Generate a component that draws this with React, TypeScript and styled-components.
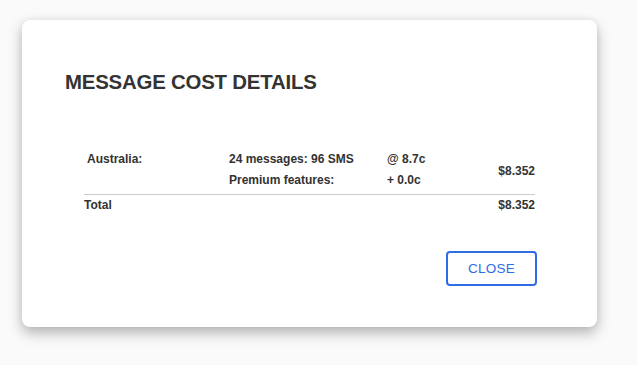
import styled, { createGlobalStyle } from "styled-components";

const GlobalStyle = createGlobalStyle`
    html, body {
        margin: 0;
        padding: 0;
        background: #fafafa;
        font-family: "Liberation Sans", Arial, sans-serif;
    }
`

const Page = styled.div`
    box-sizing: border-box;
    min-height: 100vh;
    padding: 20px 0 0 22px;
    background: #fafafa;
`

const Card = styled.div`
    box-sizing: border-box;
    width: 575px;
    height: 307px;
    background: #fff;
    border-radius: 8px;
    box-shadow: 0 6px 14px rgba(0, 0, 0, 0.28), 0 0 6px rgba(0, 0, 0, 0.06);
    padding: 50px 60px 0 43px;
    display: flex;
    flex-direction: column;
`

const Title = styled.h2`
    margin: 0;
    font-size: 20.4px;
    line-height: 24px;
    font-weight: bold;
    color: #333;
    letter-spacing: -0.2px;
`

const CostTable = styled.table`
    margin: 55px 0 0 19px;
    width: 451px;
    border-collapse: collapse;
    font-size: 12px;
    font-weight: bold;
    color: #333;
`

const Cell = styled.td<{ $right?: boolean; $indent?: number; $bottom?: number }>`
    padding: 3px 0 ${(p) => p.$bottom ?? 3}px ${(p) => p.$indent ?? 0}px;
    text-align: ${(p) => (p.$right ? "right" : "left")};
    vertical-align: middle;
    line-height: 15px;
`

const TotalRow = styled.tr`
    border-top: 1px solid #ccc;
`

const Actions = styled.div`
    display: flex;
    justify-content: flex-end;
    margin-top: 35px;
`

const CloseButton = styled.button`
    width: 91px;
    height: 35px;
    border: 2px solid #2f6de6;
    border-radius: 4px;
    background: #fff;
    color: #2f6de6;
    font-family: "Liberation Sans", Arial, sans-serif;
    font-size: 13.5px;
    letter-spacing: 0.2px;
    cursor: pointer;
`

export default function App() {
    return (
        <>
            <GlobalStyle />
            <Page>
                <Card>
                    <Title>MESSAGE COST DETAILS</Title>
                    <CostTable>
                        <colgroup>
                            <col style={{ width: 145 }} />
                            <col style={{ width: 158 }} />
                            <col style={{ width: 80 }} />
                            <col />
                        </colgroup>
                        <tbody>
                            <tr>
                                <Cell $indent={3} style={{ verticalAlign: "top" }} rowSpan={2}>Australia:</Cell>
                                <Cell>24 messages: 96 SMS</Cell>
                                <Cell>@ 8.7c</Cell>
                                <Cell $right rowSpan={2}>$8.352</Cell>
                            </tr>
                            <tr>
                                <Cell $bottom={6}>Premium features:</Cell>
                                <Cell $bottom={6}>+ 0.0c</Cell>
                            </tr>
                            <TotalRow>
                                <Cell>Total</Cell>
                                <Cell />
                                <Cell />
                                <Cell $right>$8.352</Cell>
                            </TotalRow>
                        </tbody>
                    </CostTable>
                    <Actions>
                        <CloseButton>CLOSE</CloseButton>
                    </Actions>
                </Card>
            </Page>
        </>
    );
}
